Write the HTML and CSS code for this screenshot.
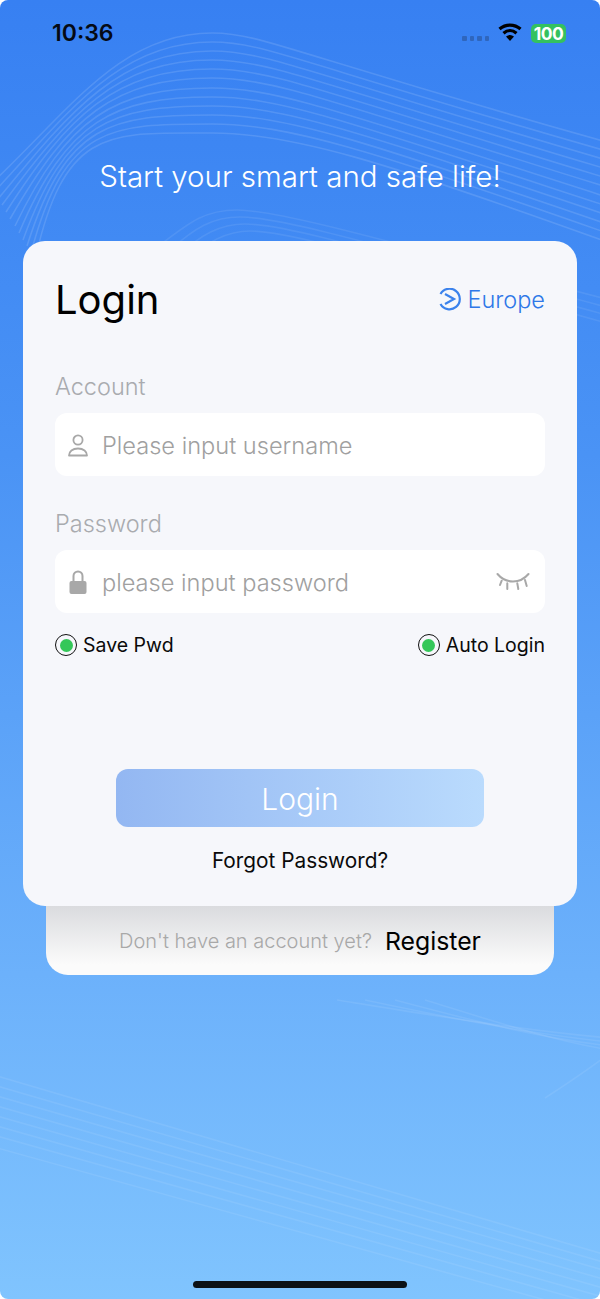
FILE: index.html
```html
<!DOCTYPE html>
<html lang="en">
<head>
  <meta charset="UTF-8">
  <meta name="viewport" content="width=device-width, initial-scale=1.0">
  <title>Login</title>
  <link rel="stylesheet" href="styles.css">
</head>
<body>
  <div class="screen">
    <svg class="waves" viewBox="0 0 600 1299" fill="none" stroke="#fff">
      <g stroke-opacity="0.12" stroke-width="1.6">
        <path d="M-10 185C70 110 120 33 212 33C260 33 280 50 610 143"/>
        <path d="M-6 192C70 111 119 42 212 42C263 42 289 60 610 152"/>
        <path d="M-2 199C69 113 118 51 212 51C265 51 298 70 610 161"/>
        <path d="M2 205C69 114 117 60 212 60C268 60 307 80 610 170"/>
        <path d="M6 212C68 115 116 69 212 69C271 69 316 90 610 179"/>
        <path d="M10 219C68 117 115 78 212 78C274 78 325 100 610 188"/>
        <path d="M15 226C67 118 115 88 212 88C276 88 335 110 610 198"/>
        <path d="M19 233C67 120 114 97 212 97C279 97 344 120 610 207"/>
        <path d="M23 240C66 121 113 106 212 106C282 106 353 130 610 216"/>
        <path d="M27 246C66 122 112 115 212 115C285 115 362 140 610 225"/>
        <path d="M31 253C65 124 111 124 212 124C287 124 371 150 610 234"/>
        <path d="M35 260C65 125 110 133 212 133C290 133 380 160 610 243"/>
      </g>
      <g stroke-opacity="0.08" stroke-width="1.6">
        <path d="M160 245C190 222 205 210 237 210C280 210 400 245 610 300"/>
        <path d="M170 250C195 228 212 217 240 217C285 217 400 252 610 308"/>
        <path d="M180 255C200 235 220 224 245 224C290 224 400 259 610 316"/>
        <path d="M190 260C205 242 228 231 250 231C295 231 400 266 610 324"/>
      </g>
      <g stroke-opacity="0.08" stroke-width="1.6">
        <path d="M337 1000C430 1015 520 1030 610 1038"/>
        <path d="M365 1000C450 1018 530 1034 610 1042"/>
        <path d="M395 1000C470 1020 540 1038 610 1046"/>
        <path d="M425 1000C490 1020 550 1040 610 1050"/>
        <path d="M610 1053C585 1072 565 1085 545 1098"/>
        <path d="M-10 1074L610 1256"/>
        <path d="M-10 1084L610 1264"/>
        <path d="M-10 1094L610 1272"/>
        <path d="M-10 1104L610 1281"/>
        <path d="M-10 1114L610 1290"/>
        <path d="M-10 1124L610 1299"/>
        <path d="M-10 1134L610 1308"/>
        <path d="M-10 1146L610 1318"/>
      </g>
    </svg>

    <div class="status-bar">
      <span class="time">10:36</span>
      <div class="status-right">
        <div class="signal"><i></i><i></i><i></i><i></i></div>
        <svg class="wifi" width="24" height="18" viewBox="0 0 24 18" fill="none" stroke="#000" stroke-width="3.2">
          <path d="M1.500 6C7.500 0.800 16.500 0.800 22.500 6"/>
          <path d="M5.500 10.300C9.500 6.800 14.500 6.800 18.500 10.300"/>
          <path d="M12 18L8 13.500C10.500 11.500 13.500 11.500 16 13.500Z" fill="#000" stroke="none"/>
        </svg>
        <span class="battery">100</span>
      </div>
    </div>

    <h2 class="tagline">Start your smart and safe life!</h2>

    <div class="card">
      <div class="card-head">
        <h1>Login</h1>
        <div class="region">
          <svg width="24" height="24" viewBox="0 0 24 24" fill="none" stroke="#3b82ec" stroke-width="2.200">
            <path d="M3.500 6A10.300 10.300 0 1 1 3.500 16"/>
            <path d="M8 6L17 11L8 16"/>
          </svg>
          <span>Europe</span>
        </div>
      </div>

      <div class="label">Account</div>
      <div class="field">
        <svg width="24" height="24" viewBox="0 0 24 24" fill="none" stroke="#a8a8a8" stroke-width="1.800">
          <circle cx="12" cy="7" r="4.600"/>
          <path d="M3 22.500C3 18.500 6.500 15.500 12 15.500C17.500 15.500 21 18.500 21 22.500Z" stroke-linejoin="round"/>
        </svg>
        <span class="placeholder">Please input username</span>
      </div>

      <div class="label">Password</div>
      <div class="field">
        <svg width="24" height="24" viewBox="0 0 24 24" fill="none">
          <path d="M7.500 11V6A4.500 4.500 0 0 1 16.500 6V11" stroke="#a8a8a8" stroke-width="2"/>
          <rect x="3.500" y="11" width="17" height="13" rx="2" fill="#a8a8a8"/>
        </svg>
        <span class="placeholder">please input password</span>
        <svg class="eye" width="34" height="20" viewBox="0 0 34 20" fill="none" stroke="#a8a8a8" stroke-width="2" stroke-linecap="round">
          <path d="M1.500 2C10 12 24 12 32.500 2"/>
          <path d="M5.700 8.700L4 13M11.300 11.300V17M21.300 11.300L22.300 17M29 8L30.700 14"/>
        </svg>
      </div>

      <div class="options">
        <div class="option"><span class="radio"></span>Save Pwd</div>
        <div class="option"><span class="radio"></span>Auto Login</div>
      </div>

      <div class="login-btn">Login</div>
      <div class="forgot">Forgot Password?</div>
    </div>

    <div class="register">
      <span class="register-hint">Don't have an account yet?</span>
      <span class="register-link">Register</span>
    </div>

    <div class="home-bar"></div>
  </div>
</body>
</html>
```

FILE: styles.css
```css
*{
  box-sizing: border-box;
}

body{
  margin: 0;
  background: #fff;
  font-family: "Inter", "Liberation Sans", sans-serif;
}

.screen{
  position: relative;
  width: 600px;
  height: 1299px;
  overflow: hidden;
  border-radius: 8px;
  background: linear-gradient(180deg, #3780f2 0%, #4a93f5 35%, #6cb1fb 75%, #80c4fe 100%);
  display: flex;
  flex-direction: column;
  align-items: center;
}

.waves{
  position: absolute;
  left: 0;
  top: 0;
  width: 600px;
  height: 1299px;
}

.status-bar{
  position: relative;
  width: 100%;
  height: 66px;
  padding: 20px 34px 0 52px;
  display: flex;
  justify-content: space-between;
  align-items: flex-start;
}

.time{
  font-size: 23px;
  font-weight: 600;
  line-height: 26px;
  color: #050a14;
}

.status-right{
  display: flex;
  align-items: center;
  margin-top: 3px;
}

.signal{
  display: flex;
  gap: 3px;
  margin-top: 11px;
  margin-right: 9px;
}

.signal i{
  width: 4.500px;
  height: 4.500px;
  border-radius: 1px;
  background: #2f66bd;
}

.wifi{
  margin-right: 9px;
  margin-bottom: 2px;
}

.battery{
  width: 35px;
  height: 19px;
  border-radius: 5px;
  background: #34c15f;
  color: #fff;
  font-size: 17.500px;
  font-weight: 700;
  letter-spacing: -0.5px;
  line-height: 19px;
  text-align: center;
}

.tagline{
  position: relative;
  margin: 91px 0 0 0;
  height: 84px;
  font-size: 29.500px;
  font-weight: 300;
  line-height: 38px;
  color: #fff;
}

.card{
  position: relative;
  width: 554px;
  height: 665px;
  background: #f6f7fb;
  border-radius: 22px;
  padding: 32px 32px 0 32px;
  z-index: 1;
}

.card-head{
  display: flex;
  justify-content: space-between;
  align-items: center;
  height: 54px;
  margin-bottom: 47px;
}

.card-head h1{
  margin: -2px 0 0 0;
  font-size: 40px;
  font-weight: 400;
  color: #000;
}

.region{
  display: flex;
  align-items: center;
  gap: 6px;
  font-size: 23.500px;
  font-weight: 300;
  color: #2f78e8;
}

.region span{
  margin-top: -2px;
}

.label{
  height: 26px;
  font-size: 23.500px;
  font-weight: 300;
  line-height: 26px;
  color: #a9abaf;
}

.field{
  display: flex;
  align-items: center;
  height: 63px;
  margin: 13px 0 35px 0;
  padding: 0 15px 0 11px;
  background: #fff;
  border-radius: 12px;
}

.placeholder{
  margin: 1px 0 0 12px;
  font-size: 23.600px;
  font-weight: 300;
  color: #a0a0a0;
}

.eye{
  margin-left: auto;
}

.options{
  display: flex;
  justify-content: space-between;
  margin-top: -15px;
  height: 24px;
}

.option{
  display: flex;
  align-items: center;
  gap: 6px;
  font-size: 19.500px;
  font-weight: 400;
  color: #0a0a0a;
}

.radio{
  width: 22px;
  height: 22px;
  border: 1.500px solid #111;
  border-radius: 50%;
  display: flex;
  align-items: center;
  justify-content: center;
}

.radio::before{
  content: "";
  width: 13px;
  height: 13px;
  border-radius: 50%;
  background: #34c759;
}

.login-btn{
  width: 368px;
  height: 58px;
  margin: 112px auto 0 auto;
  border-radius: 12px;
  background: linear-gradient(90deg, #93b7f2 0%, #badbfd 100%);
  color: #fff;
  font-size: 30px;
  font-weight: 300;
  line-height: 60px;
  text-align: center;
}

.forgot{
  margin-top: 21px;
  font-size: 20.800px;
  font-weight: 400;
  line-height: 26px;
  text-align: center;
  color: #0a0a0a;
}

.register{
  position: relative;
  width: 508px;
  height: 69px;
  border-radius: 0 0 22px 22px;
  background: linear-gradient(180deg, #dadbde 0%, #fbfbfb 85%);
  display: flex;
  align-items: center;
  justify-content: center;
  gap: 13px;
}

.register-hint{
  font-size: 20px;
  font-weight: 300;
  color: #a8a8a8;
}

.register-link{
  font-size: 24.800px;
  font-weight: 400;
  color: #000;
}

.home-bar{
  position: absolute;
  left: 193px;
  bottom: 11px;
  width: 214px;
  height: 7px;
  border-radius: 4px;
  background: #0c1116;
}
```
